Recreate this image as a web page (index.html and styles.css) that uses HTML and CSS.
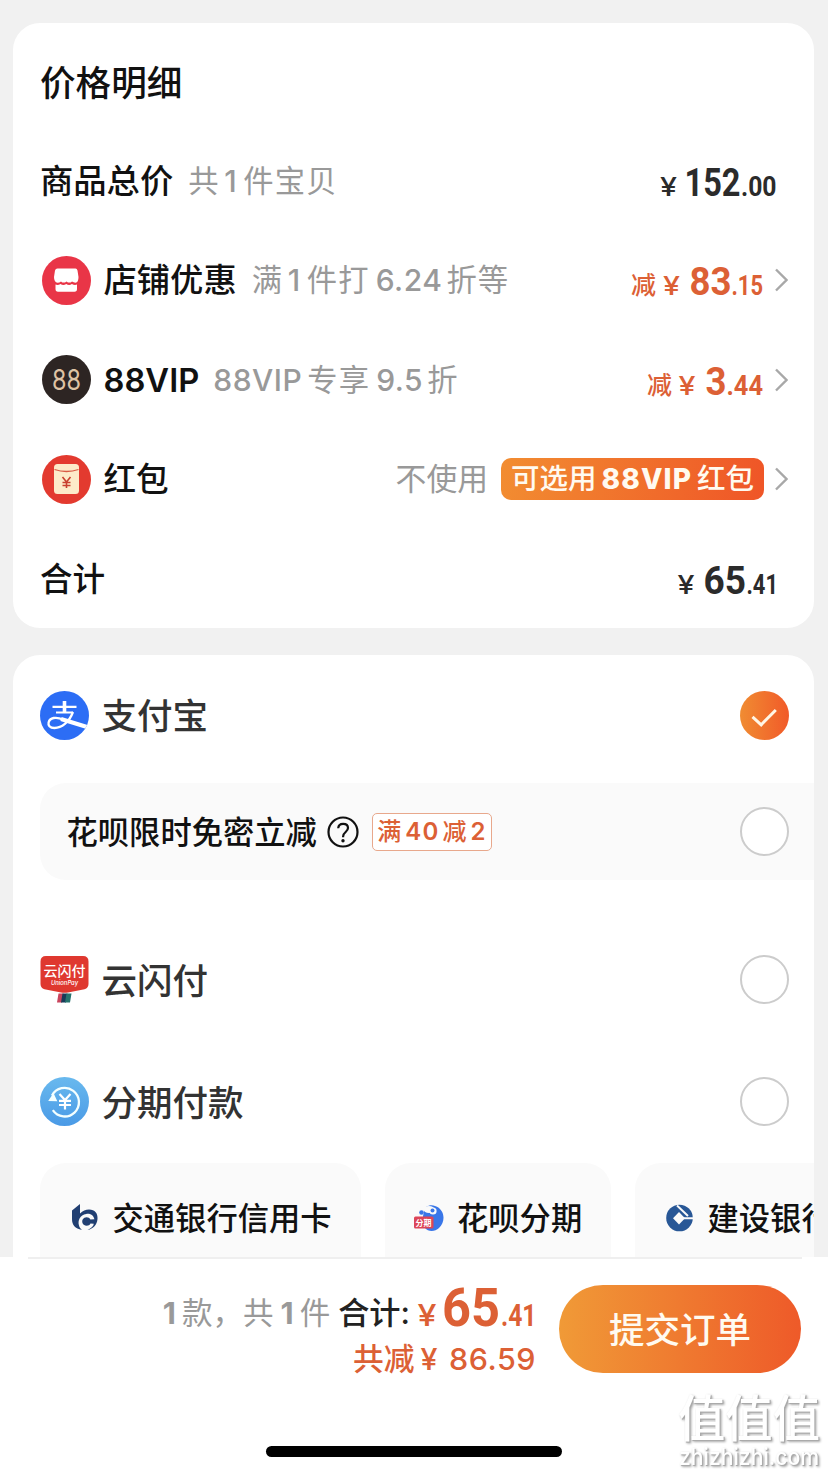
FILE: index.html
```html
<!DOCTYPE html>
<html lang="zh-CN">
<head>
<meta charset="utf-8">
<title>确认订单</title>
<link rel="stylesheet" href="styles.css">
</head>
<body>
<div class="screen">
  <main class="content">
    <section class="card price-card">
      <h1 class="row title">价格明细</h1>
      <div class="row">
        <span class="label">商品总价</span>
        <span class="note">共<i class="one">1</i>件宝贝</span>
        <svg class="price plain" width="150" height="50"><text x="33" y="40" class="yen" textLength="17" lengthAdjust="spacingAndGlyphs">¥</text><text x="57.500" y="40" class="big" textLength="56" lengthAdjust="spacingAndGlyphs">152</text><text x="114" y="40" class="small" textLength="35.500" lengthAdjust="spacingAndGlyphs">.00</text></svg>
      </div>
      <div class="row">
        <svg class="icon" width="49" height="49" viewBox="0 0 49 49"><circle cx="24.500" cy="24.500" r="24.500" fill="#e93547"/><path d="M15.500 12.500h18q1.500 0 2 2l1 6.500q0 5.500-3 5.700-2-.3-3.500-1.300-2.500 2.400-5.500 0-3 2.400-5.500 0-1.500 1.300-3.500 1.300-3.500-.5-3.500-5.700l1-6.500q.5-2 2.500-2z" fill="#fff"/><path d="M13.500 28.500q2.500 1 5-.6 2.900 2.100 5.700 0 2.900 2.100 5.700 0 2.600 1.700 5.100.6v4.500q0 2.800-2.500 2.800H16q-2.500 0-2.500-2.800z" fill="#fff"/></svg>
        <span class="label">店铺优惠</span>
        <span class="note n-shop">满<i class="one">1</i>件打<i class="dec">6.24</i>折等</span>
        <svg class="price orange" width="150" height="50"><text x="18" y="38.500" class="cut">减</text><text x="50" y="40" class="yen" textLength="17" lengthAdjust="spacingAndGlyphs">¥</text><text x="76.500" y="40" class="big" textLength="42" lengthAdjust="spacingAndGlyphs">83</text><text x="118.500" y="40" class="small" textLength="31.500" lengthAdjust="spacingAndGlyphs">.15</text></svg>
        <svg class="arrow" width="13" height="24" viewBox="0 0 13 24"><path d="M1 1.500 11.500 12 1 22.500"/></svg>
      </div>
      <div class="row">
        <svg class="icon" width="49" height="49" viewBox="0 0 49 49"><circle cx="24.500" cy="24.500" r="24.500" fill="#2d2523"/><text x="10" y="35" class="vip-mark" textLength="29" lengthAdjust="spacingAndGlyphs">88</text></svg>
        <span class="label latin">88VIP</span>
        <span class="note n-vip"><i class="lead">88VIP</i>专享<i class="dec">9.5</i>折</span>
        <svg class="price orange" width="150" height="50"><text x="34" y="38.500" class="cut">减</text><text x="65.500" y="40" class="yen" textLength="17" lengthAdjust="spacingAndGlyphs">¥</text><text x="92.500" y="40" class="big" textLength="21" lengthAdjust="spacingAndGlyphs">3</text><text x="113.500" y="40" class="small" textLength="36.500" lengthAdjust="spacingAndGlyphs">.44</text></svg>
        <svg class="arrow" width="13" height="24" viewBox="0 0 13 24"><path d="M1 1.500 11.500 12 1 22.500"/></svg>
      </div>
      <div class="row">
        <svg class="icon" width="49" height="49" viewBox="0 0 49 49"><circle cx="24.500" cy="24.500" r="24.500" fill="#e33a2f"/><rect x="12" y="9" width="25" height="30" rx="3.500" fill="#fdebc9"/><path d="M12.500 14.500q12 4 24 0" fill="none" stroke="#d95a45" stroke-width="1.300"/><path d="m20.500 22 4 5 4-5M24.500 27v6M20.500 27.500h8M20.500 30.500h8" fill="none" stroke="#c9402f" stroke-width="1.600"/></svg>
        <span class="label two">红包</span>
        <span class="unused">不使用</span>
        <span class="coupon">可选用<b>88VIP</b>红包</span>
        <svg class="arrow" width="13" height="24" viewBox="0 0 13 24"><path d="M1 1.500 11.500 12 1 22.500"/></svg>
      </div>
      <div class="row">
        <span class="label two">合计</span>
        <svg class="price plain" width="150" height="50"><text x="50.500" y="40" class="yen" textLength="17" lengthAdjust="spacingAndGlyphs">¥</text><text x="76.500" y="40" class="big" textLength="42.500" lengthAdjust="spacingAndGlyphs">65</text><text x="119.500" y="40" class="small" textLength="31.500" lengthAdjust="spacingAndGlyphs">.41</text></svg>
      </div>
    </section>

    <section class="card pay-card">
      <div class="pay">
        <svg width="49" height="49" viewBox="0 0 49 49"><defs><clipPath id="ali"><circle cx="24.500" cy="24.500" r="24.500"/></clipPath></defs><circle cx="24.500" cy="24.500" r="24.500" fill="#2c6df5"/><g clip-path="url(#ali)" fill="none" stroke="#fff"><path d="M12.500 15.800h24M16 21.500h17" stroke-width="2.200"/><path d="M24.500 10v11" stroke-width="3.600"/><path d="M33 21C29 31.500 21.500 37 14.500 37 9.500 37 8 34 8.600 31.500c1.200-5 7.500-6 14.500-3" stroke-width="2.300"/><path d="m21 28 26 8" stroke-width="4.200"/></g></svg>
        <span class="pay-name">支付宝</span>
        <svg class="choice" width="49" height="49" viewBox="0 0 49 49"><defs><linearGradient id="chk"><stop stop-color="#f08c32"/><stop offset="1" stop-color="#f15a29"/></linearGradient></defs><circle cx="24.500" cy="24.500" r="24.500" fill="url(#chk)"/><path d="m12.500 25.800 8.700 8L35.800 19" fill="none" stroke="#fff6e6" stroke-width="3"/></svg>
      </div>
      <div class="promo">
        <span class="promo-name">花呗限时免密立减</span>
        <svg class="help" width="32" height="32" viewBox="0 0 32 32"><circle cx="16" cy="16" r="14.500"/><path d="M11.200 12.300c.2-3 2.200-4.500 4.900-4.500 2.900 0 4.900 1.700 4.900 4.300 0 3.800-4.900 4-4.900 8.300v.8"/><circle class="dot" cx="16" cy="24.700" r="1.700"/></svg>
        <span class="tag">满<i>40</i>减<i>2</i></span>
        <span class="radio choice"></span>
      </div>
      <div class="pay union">
        <svg width="49" height="49" viewBox="0 0 49 49"><path d="M6 1h37q5.500 0 5.500 5.500V29q0 4-4 5.200L28 37.500q-3.500.7-7 0L4.500 34.200Q.5 33 .5 29V6.500Q.5 1 6 1z" fill="#df382f"/><text x="3.500" y="21" class="up-cn" textLength="42" lengthAdjust="spacingAndGlyphs">云闪付</text><text x="11" y="30" class="up-en" textLength="27" lengthAdjust="spacingAndGlyphs">UnionPay</text><path d="M18.500 38.500h5l-1.500 9h-5z" fill="#c9445d"/><path d="M22.500 38.500h5l-1.500 9h-5z" fill="#183a58"/><path d="M26.500 38.500h5l-1.500 9h-5z" fill="#26736e"/></svg>
        <span class="pay-name">云闪付</span>
        <span class="radio choice"></span>
      </div>
      <div class="pay stage">
        <svg width="49" height="49" viewBox="0 0 49 49"><defs><linearGradient id="st" x2="0" y2="1"><stop stop-color="#69b9ee"/><stop offset="1" stop-color="#4a9ae6"/></linearGradient></defs><circle cx="24.500" cy="24.500" r="24.500" fill="url(#st)"/><path d="M12.800 33.200A14.300 14.300 0 1 0 12 18.500" fill="none" stroke="#f4ffff" stroke-width="2.300"/><path d="M8.200 24 13.500 16l3.800 8.300z" fill="#f4ffff"/><path d="m19.500 17 5.500 6 5.500-6M25 23v9.500M19 23.800h12M19 28h12" fill="none" stroke="#fff" stroke-width="2.200"/></svg>
        <span class="pay-name">分期付款</span>
        <span class="radio choice"></span>
      </div>
      <div class="banks">
        <div class="bank bank-a">
          <svg width="28" height="30" viewBox="0 0 28 30"><path d="M1 7.500 9 1v9.500Q13 6.500 18 6.500c6 0 9 4 8.500 9.500-.6 6-4 9.800-10 11 4-2 6-4 6.300-6.300l-3.300-.2c-1 2.400-4.500 3-6.700 1.200-2.300-2-2-5.500.6-7 2.200-1.200 5-.4 6 1.800l4-.2c-1-4.500-4.500-6-8.200-5.400C9 12 6.500 17.500 8 22.500c.5 2 1.500 3.300 3 4.500C4 25.500 1 22 1 16z" fill="#213f72"/></svg>
          <span>交通银行信用卡</span>
        </div>
        <div class="bank bank-b">
          <svg width="30" height="28" viewBox="0 0 30 28"><path d="M10 8C9 3 16 0 21 2c10 3 11 16 4 22-4 4-11 4-14 0-3-3-3-9-1-16z" fill="#3976e8"/><circle cx="7.500" cy="8.500" r="2.300" fill="#3976e8"/><ellipse cx="15" cy="5.500" rx="5.500" ry="3.500" fill="#fafafa"/><circle cx="19" cy="7" r="3.600" fill="#fafafa"/><circle cx="18.500" cy="6.500" r="2" fill="#3976e8"/><rect x="0" y="12.500" width="19.500" height="12" rx="1.500" fill="#dc4558"/><text x="1.500" y="22" class="mini" textLength="16" lengthAdjust="spacingAndGlyphs">分期</text></svg>
          <span>花呗分期</span>
        </div>
        <div class="bank bank-c">
          <svg width="28" height="28" viewBox="0 0 28 28"><circle cx="13.500" cy="14" r="13.300" fill="#285796"/><path d="m13 8 6 6.200-6 6.200-6-6.200z" fill="#fafafa"/><path d="M11 1.500 22 12M17 14.200h11" fill="none" stroke="#fafafa" stroke-width="2"/></svg>
          <span>建设银行</span>
        </div>
      </div>
    </section>
  </main>

  <footer class="bar">
    <div class="totals">
      <div class="sum">
        <span class="count"><b>1</b>款，共<b>1</b>件</span>
        <span class="sum-label">合计:</span>
        <svg class="sum-price orange" width="126" height="50"><text x="7.500" y="40" class="yen f-yen" textLength="19" lengthAdjust="spacingAndGlyphs">¥</text><text x="32" y="40" class="f-big" textLength="58" lengthAdjust="spacingAndGlyphs">65</text><text x="91" y="40" class="f-small" textLength="35.500" lengthAdjust="spacingAndGlyphs">.41</text></svg>
      </div>
      <div class="saved">共减<i>¥ 86.59</i></div>
    </div>
    <button class="submit">提交订单</button>
    <div class="home"></div>
  </footer>
  <div class="watermark">
    <svg width="150" height="84"><text x="3" y="46" class="wm-cn" textLength="142" lengthAdjust="spacingAndGlyphs">值值值</text><text x="4" y="74" class="wm-en" textLength="140" lengthAdjust="spacingAndGlyphs">zhizhizhi.com</text></svg>
  </div>
</div>
</body>
</html>
```

FILE: styles.css
```css
* { box-sizing: border-box; }
body {
  margin: 0;
  background: #f1f1f1;
  font-family: Inter, "Noto Sans CJK SC", sans-serif;
  color: #111;
}
i { font-style: normal; }
svg { display: block; flex: none; }
.screen {
  position: relative;
  width: 828px;
  height: 1475px;
  overflow: hidden;
  display: flex;
  flex-direction: column;
}
.content { height: 1257px; padding: 23px 14px 0 13px; overflow: hidden; }
.card { background: #fff; border-radius: 27px; }
.price-card { height: 605px; padding: 9px 26px 0 27px; }
.row {
  display: flex;
  align-items: center;
  height: 99.4px;
  margin: 0;
  line-height: 50px;
  white-space: nowrap;
}
.title { padding-top: 4px; font-size: 35.6px; font-weight: 500; }
.icon { margin: 0 13px 0 1.5px; }
.label { font-size: 33.3px; font-weight: 500; }
.two { font-size: 32.6px; }
.latin { font-size: 32.7px; font-weight: 600; }
.note { margin-left: 15px; font-size: 30.3px; letter-spacing: 1.2px; color: #999; }
.note i { font-size: 30px; font-weight: 500; letter-spacing: .5px; }
.note .one { margin: 0 6px 0 4.5px; }
.note .dec { margin: 0 4px 0 6px; }
.note .lead { margin: 0 5px 0 -1px; }
.price { margin-left: auto; overflow: visible; fill: #2b2b2b; }
.price.plain { margin-right: 11px; }
.orange { fill: #dc6035; }
.price.orange { fill: #dc6035; }
.price.orange + .arrow { margin-left: 12px; }
.yen { font: 500 26px Inter, sans-serif; }
.big { font: 700 39px Roboto, sans-serif; }
.small { font: 700 28px Roboto, sans-serif; }
.cut { font: 500 25px "Noto Sans CJK SC", sans-serif; }
.arrow { fill: none; stroke: #a8a8a8; stroke-width: 2.4; }
.vip-mark { font: 400 28px Inter, sans-serif; fill: #dfc3a4; }
.unused { margin-left: auto; font-size: 30.8px; color: #999; }
.coupon {
  margin: 0 11px 0 13px;
  width: 263px;
  height: 42px;
  border-radius: 10px;
  background: linear-gradient(100deg, #f28d31, #ef5527);
  color: #fffaf0;
  font-size: 28.5px;
  font-weight: 500;
  line-height: 41px;
  text-align: center;
}
.coupon b { font-weight: 800; font-size: 28px; margin: 0 5px; letter-spacing: 1.1px; }

.pay-card { height: 700px; margin-top: 27px; padding: 35.5px 0 0 27px; overflow: hidden; }
.pay { display: flex; align-items: center; height: 49px; padding-right: 25.5px; }
.pay-name { margin-left: 12.5px; padding-top: 3px; font-size: 35.5px; line-height: 49px; font-weight: 500; color: #333; }
.choice { margin-left: auto; }
.radio { width: 49px; height: 49px; border: 2.4px solid #ccc; border-radius: 50%; background: #fff; flex: none; }
.promo {
  display: flex;
  align-items: center;
  height: 97px;
  margin-top: 43.5px;
  padding: 0 25.5px 0 26.5px;
  border-radius: 26px 0 0 26px;
  background: #fafafa;
}
.promo-name { margin-top: -3px; font-size: 31.3px; font-weight: 500; }
.help { margin: 0 13px 0 10px; fill: none; stroke: #111; stroke-width: 2.2; }
.help .dot { fill: #111; stroke: none; }
.tag {
  width: 120px;
  height: 38px;
  border: 1.5px solid #e8a88c;
  border-radius: 5px;
  background: #fff;
  color: #dc6035;
  font-size: 24px;
  font-weight: 500;
  line-height: 36px;
  text-align: center;
  white-space: nowrap;
}
.tag i { font-weight: 600; letter-spacing: 1.2px; margin: 0 3px 0 4px; }
.tag i:last-child { margin-right: 0; }
.union { margin-top: 75px; }
.stage { margin-top: 73px; }
.banks { display: flex; gap: 24px; margin-top: 37px; }
.bank {
  display: flex;
  align-items: center;
  flex: none;
  height: 130px;
  padding-bottom: 20px;
  border-radius: 26px;
  background: #fafafa;
  font-size: 31.3px;
  font-weight: 500;
  white-space: nowrap;
}
.bank span { margin-top: -4px; }
.bank-a { width: 321px; padding-left: 31px; gap: 13.5px; }
.bank-b { width: 226px; padding-left: 29px; gap: 13px; }
.bank-c { width: 280px; padding-left: 31px; gap: 13.5px; }
.mini { font: 700 8.5px "Noto Sans CJK SC", sans-serif; fill: #fff; }
.up-cn { font: 500 14px "Noto Sans CJK SC", sans-serif; fill: #fff; }
.up-en { font: italic 500 6.5px Inter, sans-serif; fill: #fff; }

.bar {
  display: grid;
  grid-template-columns: 536px 242px;
  column-gap: 23px;
  height: 218px;
  background: #fff linear-gradient(#efefef, #efefef) 28px 0 / 774px 2px no-repeat;
}
.totals { padding-top: 29px; }
.sum { display: flex; justify-content: flex-end; align-items: center; height: 50px; font-size: 30.5px; line-height: 50px; white-space: nowrap; }
.count, .sum-label { padding-top: 3px; }
.count { color: #999; margin-right: 8px; }
.count b { font-weight: 700; margin-right: 6px; }
.count b:last-of-type { margin-left: 7px; }
.sum-label { font-size: 31.2px; font-weight: 500; color: #222; }
.sum-price { overflow: visible; }
.f-yen { font-size: 30px; }
.f-big { font: 700 53px Roboto, sans-serif; }
.f-small { font: 700 31px Roboto, sans-serif; }
.saved { color: #dc6035; font-size: 30.8px; font-weight: 500; line-height: 46px; text-align: right; white-space: nowrap; }
.saved i { font-weight: 500; font-size: 30.5px; margin-left: 6px; letter-spacing: .5px; word-spacing: 2.5px; }
.submit {
  width: 242px;
  height: 88px;
  margin: 28px 0 0;
  padding: 0 0 4px;
  border: 0;
  border-radius: 44px;
  background: linear-gradient(90deg, #f09a37, #ee5a29);
  color: #fffaf0;
  font: 500 35.5px "Noto Sans CJK SC", sans-serif;
}
.home { grid-column: 1 / -1; align-self: end; width: 296px; height: 11px; margin: 0 0 18px 266px; border-radius: 6px; background: #000; }
.watermark { position: absolute; left: 675px; top: 1391px; filter: drop-shadow(1px 1px 0 #aaa) drop-shadow(1px 1px 1px #aaa); }
.wm-cn { font: 500 50px "Noto Sans CJK SC", sans-serif; fill: #fff; }
.wm-en { font: 500 23px Inter, sans-serif; fill: #fff; }
```
